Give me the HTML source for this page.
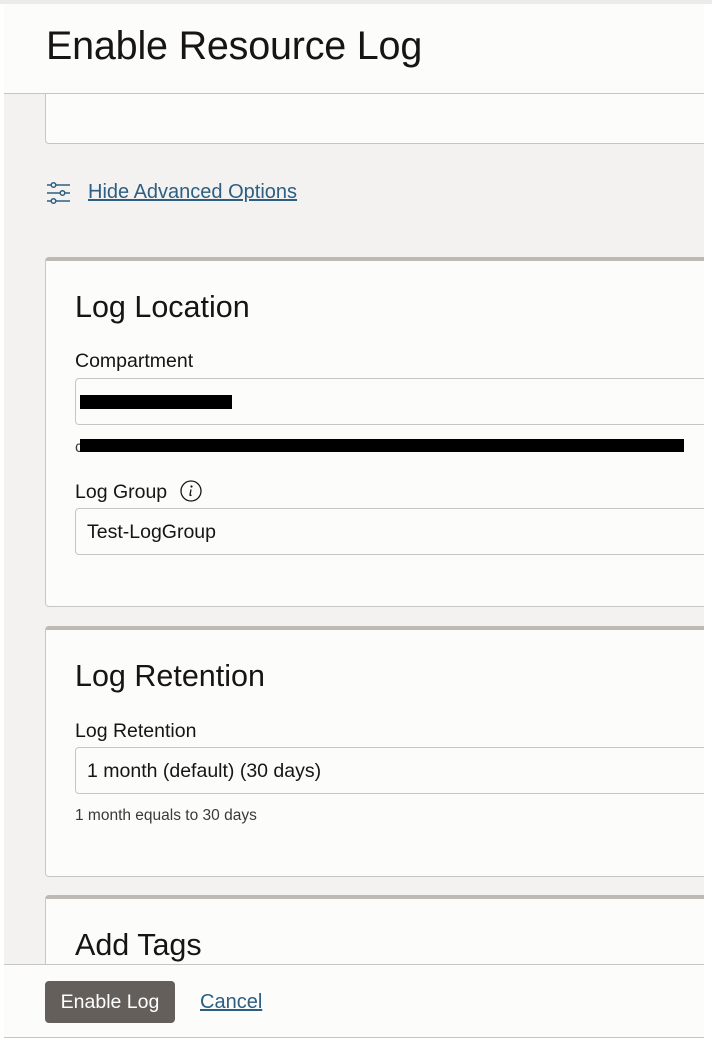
<!DOCTYPE html>
<html><head><style>
body{margin:0;width:712px;height:1042px;overflow:hidden;background:#fff;font-family:"Liberation Sans",sans-serif;position:relative;color:#161513}
.top{position:absolute;left:0;top:0;width:712px;height:4px;background:#ebebeb}
.clip{position:absolute;left:0;top:0;width:704px;height:1042px;overflow:hidden}
.panel{position:absolute;left:4px;top:4px;width:700px;height:1034px;background:#f3f2f1}
.hdr{position:absolute;left:4px;top:4px;width:700px;height:89px;background:#fcfcfb;border-bottom:1px solid #c8c6c4}
.hdr h1{margin:0;position:absolute;left:42px;top:20px;font-size:39.5px;font-weight:normal;letter-spacing:-0.2px}
.card{position:absolute;left:45px;width:680px;background:#fcfcfb;border:1px solid #c8c6c4;border-top:4px solid #bdb9b5;border-radius:4px}
.card h2{position:absolute;left:29px;margin:0;font-size:30.5px;font-weight:normal}
.lbl{position:absolute;left:29px;font-size:19.5px}
.inp{position:absolute;left:29px;width:660px;height:47px;border:1px solid #c8c6c4;border-radius:4px;background:#fcfcfb;font-size:19.5px;line-height:47px;box-sizing:border-box;padding-left:11px}
.hint{position:absolute;left:29px;font-size:15.5px;color:#3c3a38}
.link{color:#2c5f82;text-decoration:underline;font-size:20px}
.foot{position:absolute;left:4px;top:964px;width:700px;height:72px;background:#fcfcfb;border-top:1px solid #c8c6c4;border-bottom:1px solid #c8c6c4}
.btn{position:absolute;left:41px;top:16px;width:130px;height:42px;background:#645f5a;color:#fff;border-radius:4px;font-size:19.5px;line-height:42px;text-align:center}
.red{position:absolute;background:#000}
</style></head><body>
<div class="top"></div>
<div class="clip">
<div class="panel"></div>
<div class="card" style="top:60px;height:82px;border-top:1px solid #c8c6c4"></div>
<div class="hdr"><h1>Enable Resource Log</h1></div>
<svg style="position:absolute;left:46px;top:181px" width="26" height="26" viewBox="0 0 26 26" fill="none" stroke="#2c5f82" stroke-width="1.5"><line x1="1" y1="4" x2="5" y2="4"/><circle cx="7.5" cy="4" r="2.3"/><line x1="10" y1="4" x2="24" y2="4"/><line x1="1" y1="12" x2="14" y2="12"/><circle cx="16.5" cy="12" r="2.3"/><line x1="19" y1="12" x2="24" y2="12"/><line x1="1" y1="20" x2="5" y2="20"/><circle cx="7.5" cy="20" r="2.3"/><line x1="10" y1="20" x2="24" y2="20"/></svg>
<span class="link" style="position:absolute;left:88px;top:181px">Hide Advanced Options</span>

<div class="card" style="top:257px;height:345px">
<h2 style="top:29px">Log Location</h2>
<div class="lbl" style="top:89px">Compartment</div>
<div class="inp" style="top:117px"></div>
<div class="red" style="left:34px;top:134px;width:152px;height:14px"></div>
<div class="hint" style="top:178px">c</div>
<div class="red" style="left:34px;top:178px;width:604px;height:13px"></div>
<div class="lbl" style="top:220px">Log Group</div>
<svg style="position:absolute;left:133px;top:218px" width="24" height="24" viewBox="0 0 24 24"><circle cx="12" cy="12" r="10" fill="none" stroke="#161513" stroke-width="1.3"/><circle cx="12.5" cy="7.5" r="1.1" fill="#161513"/><path d="M12 10.5 L11 16 Q11 17 12.5 16" fill="none" stroke="#161513" stroke-width="1.3"/></svg>
<div class="inp" style="top:247px">Test-LogGroup</div>
</div>

<div class="card" style="top:626px;height:246px">
<h2 style="top:29px">Log Retention</h2>
<div class="lbl" style="top:90px">Log Retention</div>
<div class="inp" style="top:117px">1 month (default) (30 days)</div>
<div class="hint" style="top:177px">1 month equals to 30 days</div>
</div>

<div class="card" style="top:895px;height:100px">
<h2 style="top:29px">Add Tags</h2>
</div>

<div class="foot">
<div class="btn">Enable Log</div>
<span class="link" style="position:absolute;left:196px;top:26px">Cancel</span>
</div>
</div>
</body></html>
